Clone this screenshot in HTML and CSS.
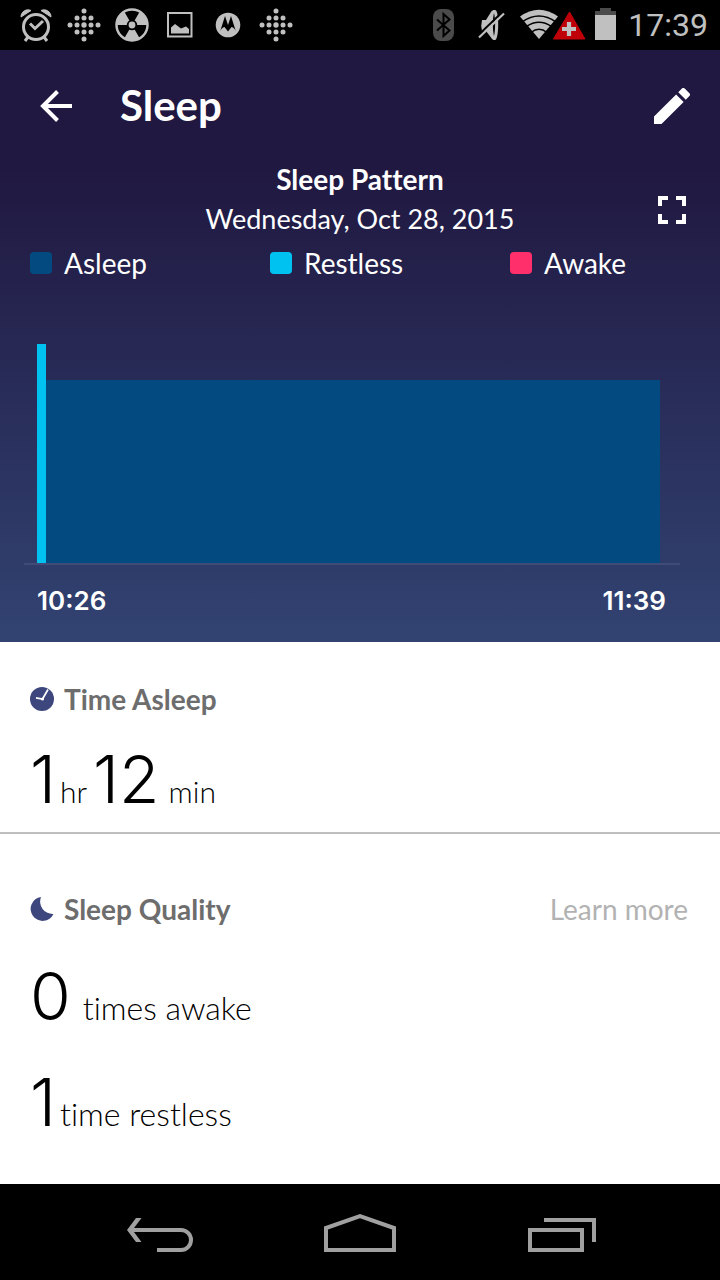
FILE: index.html
```html
<!DOCTYPE html>
<html lang="en">
<head>
<meta charset="utf-8">
<meta name="viewport" content="width=device-width, initial-scale=1">
<title>Sleep</title>
<link rel="stylesheet" href="styles.css">
</head>
<body>
<div class="screen">
  <div class="status">
    <div class="status-left">
      <svg width="32" height="34" viewBox="0 0 32 34" fill="none" stroke="#c0c0c0" stroke-width="3"><circle cx="16" cy="19" r="12.5"/><path d="M10 15.500l5 5 8-7.500M8 29l-3 4M24 29l3 4"/><path d="M1 9a7 7 0 0 1 10-6.500zM31 9a7 7 0 0 0-10-6.500z" fill="#c0c0c0" stroke="#c0c0c0" stroke-width="1"/></svg>
      <svg width="34" height="34" viewBox="0 0 34 34" fill="#c0c0c0"><circle cx="17" cy="3" r="2.500"/><circle cx="10" cy="10" r="2.500"/><circle cx="17" cy="10" r="2.500"/><circle cx="24" cy="10" r="2.500"/><circle cx="3" cy="17" r="2.500"/><circle cx="10" cy="17" r="2.500"/><circle cx="17" cy="17" r="2.700"/><circle cx="24" cy="17" r="2.500"/><circle cx="31" cy="17" r="2.500"/><circle cx="10" cy="24" r="2.500"/><circle cx="17" cy="24" r="2.500"/><circle cx="24" cy="24" r="2.500"/><circle cx="17" cy="31" r="2.500"/></svg>
      <svg width="34" height="34" viewBox="0 0 34 34"><circle cx="17" cy="17" r="15.500" fill="#000" stroke="#c0c0c0" stroke-width="2.500"/><path d="M17 17L1.500 17A15.500 15.500 0 0 1 9.200 3.600zM17 17L24.800 3.600A15.500 15.500 0 0 1 32.500 17zM17 17l7.800 13.400a15.500 15.500 0 0 1-15.600 0z" fill="#c0c0c0"/><circle cx="17" cy="17" r="4.300" fill="#c0c0c0" stroke="#000" stroke-width="1.800"/></svg>
      <svg width="34" height="34" viewBox="0 0 34 34"><path d="M5 5h23.500v23.500H5z" fill="none" stroke="#c0c0c0" stroke-width="2"/><path d="M8 25.500v-6l4-3.500 6 4.500 5-2 3 2.500v4.500z" fill="#c0c0c0"/></svg>
      <svg width="34" height="34" viewBox="0 0 34 34"><circle cx="17" cy="17" r="12.300" fill="#c0c0c0"/><path d="M9 23.700L14 8L17 17L20 8L25 23.700Q23.500 19.500 20.500 19L17 23.500L13.500 19Q10.500 19.500 9 23.700z" fill="#000"/></svg>
      <svg width="34" height="34" viewBox="0 0 34 34" fill="#c0c0c0"><circle cx="17" cy="3" r="2.500"/><circle cx="10" cy="10" r="2.500"/><circle cx="17" cy="10" r="2.500"/><circle cx="24" cy="10" r="2.500"/><circle cx="3" cy="17" r="2.500"/><circle cx="10" cy="17" r="2.500"/><circle cx="17" cy="17" r="2.700"/><circle cx="24" cy="17" r="2.500"/><circle cx="31" cy="17" r="2.500"/><circle cx="10" cy="24" r="2.500"/><circle cx="17" cy="24" r="2.500"/><circle cx="24" cy="24" r="2.500"/><circle cx="17" cy="31" r="2.500"/></svg>
    </div>
    <div class="status-right">
      <svg width="22" height="34" viewBox="0 0 22 34"><rect y="1" width="21" height="32" rx="8" fill="#4b4b4b"/><path d="M4 11.500l12.500 11-6 5.500V6l6 5.500L4 22.500" fill="none" stroke="#000" stroke-width="2"/></svg>
      <svg class="mute" width="28" height="34" viewBox="0 0 28 34"><path d="M4 12h4l5-8c1.500-2 3.500-2.500 5-1.500 3 3 3 25 0 29-2 1.500-4 0-5-2L8 23H4q-1.500-5 0-11z" fill="#c0c0c0"/><path d="M16 5c1.500 5 1.500 18 0 23-1.500-5-1.500-18 0-23z" fill="#000"/><path d="M0 27.500L25 3.500" stroke="#000" stroke-width="2"/><path d="M1 29.500L26 5.500" stroke="#c0c0c0" stroke-width="2.200"/></svg>
      <svg class="wifi" width="66" height="34" viewBox="0 0 66 34"><path d="M0 8.500Q19-5 38 8.500L19 31z" fill="#c0c0c0"/><path d="M2 14Q19 2 36 14M6.500 18.500Q19 10 31.500 18.500M11 24.500Q19 18 27 24.500" fill="none" stroke="#000" stroke-width="1.600"/><path d="M49.500 4L65 31H33.500z" fill="#c00008" stroke="#c00008"/><path d="M49 14v14M42 21h14" stroke="#c0c0c0" stroke-width="4.200"/></svg>
      <svg class="battery" width="21" height="34" viewBox="0 0 21 34"><path d="M0 7V3h5V0h11v3h5v4z" fill="#4b4b4b"/><path d="M0 7h21v25H0z" fill="#c0c0c0"/></svg>
      <span class="clock">17:39</span>
    </div>
  </div>

  <main class="main">
    <section class="hero">
      <header class="bar">
        <button class="icon-button" aria-label="Back"><svg width="32" height="32" viewBox="0 0 32 32" fill="none" stroke="#fff" stroke-width="4"><path d="M17.500 1.500L3 16l14.500 14.500M2 16h30"/></svg></button>
        <h1 class="title">Sleep</h1>
        <button class="icon-button" aria-label="Edit"><svg width="36" height="36" viewBox="3 3 18 18" fill="#fff"><path d="M3 17.250V21h3.750L17.810 9.940l-3.750-3.750L3 17.250zM20.710 7.040c.39-.39.39-1.020 0-1.410l-2.340-2.340a1 1 0 0 0-1.410 0l-1.830 1.830 3.750 3.750 1.830-1.830z"/></svg></button>
      </header>
      <div class="pattern">
        <div class="pattern-text">
          <h2 class="pattern-title">Sleep Pattern</h2>
          <p class="date">Wednesday, Oct 28, 2015</p>
        </div>
        <button class="icon-button expand" aria-label="Full screen"><svg width="28" height="28" viewBox="0 0 28 28" fill="none" stroke="#fff" stroke-width="4"><path d="M2 10V2h8M18 2h8v8M26 18v8h-8M10 26H2v-8"/></svg></button>
      </div>
      <ul class="legend">
        <li><span class="swatch asleep"></span>Asleep</li>
        <li><span class="swatch restless"></span>Restless</li>
        <li><span class="swatch awake"></span>Awake</li>
      </ul>
      <div class="chart">
        <div class="bar-restless"></div>
        <div class="bar-asleep"></div>
      </div>
      <div class="times"><span>10:26</span><span>11:39</span></div>
    </section>

    <section class="card time-asleep">
      <h2 class="card-title"><svg width="24" height="24" viewBox="0 0 24 24"><circle cx="12" cy="12" r="12" fill="#3d477d"/><path d="M6 10.800l6.500 1.200L18 2.500" fill="none" stroke="#fff" stroke-width="1.700"/><circle cx="12.500" cy="12" r="1.500" fill="#fff"/></svg>Time Asleep</h2>
      <p class="stat"><span class="num">1</span><span class="unit">hr</span><span class="num second">12</span><span class="unit wide">min</span></p>
    </section>

    <section class="card quality">
      <div class="card-head">
        <h2 class="card-title"><svg width="24" height="24" viewBox="0 0 24 24"><path d="M11 0A12 12 0 1 0 23.500 17A12.500 12.500 0 0 1 11 0z" fill="#3d477d"/></svg>Sleep Quality</h2>
        <a class="learn" href="#">Learn more</a>
      </div>
      <p class="stat"><span class="num">0</span><span class="unit wide">times awake</span></p>
      <p class="stat"><span class="num">1</span><span class="unit">time restless</span></p>
    </section>
  </main>

  <nav class="nav">
    <button class="nav-button" aria-label="Back"><svg width="68" height="40" viewBox="0 0 68 40" fill="none" stroke="#a0a0a0" stroke-width="4"><path d="M5 18h50a9 9 0 0 1 0 20H31"/><path d="M15.500 6H10L1 18l9 12h5.500L6.500 18z" fill="#a0a0a0" stroke="none"/></svg></button>
    <button class="nav-button" aria-label="Home"><svg width="72" height="40" viewBox="0 0 72 40" fill="none" stroke="#a0a0a0" stroke-width="4"><path d="M2 38V16L36 4l34 12v22z"/></svg></button>
    <button class="nav-button" aria-label="Recent apps"><svg width="72" height="40" viewBox="0 0 72 40" fill="none" stroke="#a0a0a0" stroke-width="4"><path d="M6 18h52v20H6zM20 8h50v22"/></svg></button>
  </nav>
</div>
</body>
</html>
```

FILE: styles.css
```css
* { box-sizing: border-box; }
body { margin: 0; font-family: Lato, "Open Sans", sans-serif; font-variant-ligatures: none; background: #fff; color: #000; }
h1, h2, p, ul { margin: 0; padding: 0; }
svg { display: block; flex: none; }
button { margin: 0; padding: 0; border: 0; background: none; cursor: pointer; }
a { color: inherit; text-decoration: none; }

.screen { min-height: 100vh; display: flex; flex-direction: column; }

.status { height: 50px; padding: 0 12px 0 20px; background: #000; display: flex; align-items: center; justify-content: space-between; }
.status-left { display: flex; align-items: center; gap: 14px; }
.status-left svg:first-child { margin-right: 1px; }
.status-right { display: flex; align-items: center; }
.mute { margin-left: 23px; }
.wifi { margin-left: 14px; }
.battery { margin-left: 9px; }
.clock { margin-left: 12px; font: 32px/40px Roboto, sans-serif; color: #c0c0c0; }

.main { flex: 1; }

.hero { padding: 0 30px 23px; color: #fff; background: linear-gradient(#201841 0, #201841 20%, #324372 100%); }
.bar { height: 111px; display: flex; align-items: center; }
.bar .icon-button:first-child { margin-left: 10px; }
.title { flex: 1; margin-left: 48px; padding-bottom: 2px; font-size: 42px; line-height: 48px; font-weight: 700; }

.pattern { position: relative; display: flex; justify-content: center; text-align: center; }
.pattern-title { font-size: 28px; line-height: 36px; font-weight: 700; }
.date { font-size: 27px; line-height: 44px; }
.expand { position: absolute; right: 4px; bottom: 17px; }

.legend { list-style: none; display: grid; grid-template-columns: 240px 240px 1fr; margin-top: 2px; font-size: 28px; line-height: 40px; }
.legend li { display: flex; align-items: center; gap: 12px; }
.swatch { width: 22px; height: 22px; border-radius: 4px; }
.asleep { background: #024a80; }
.restless { background: #00c2f0; }
.awake { background: #ff2f6c; }

.chart { margin: 61px 10px 0 -6px; padding: 0 20px 0 13px; height: 221px; border-bottom: 2px solid #414b77; display: flex; align-items: flex-end; }
.bar-restless { width: 9px; height: 100%; background: #00c2f0; }
.bar-asleep { flex: 1; height: 183px; background: #024a80; }
.times { display: flex; justify-content: space-between; margin: 18px 24px 0 7px; font: 600 26px/36px Inter, sans-serif; }

.card { padding-left: 30px; padding-right: 32px; }
.time-asleep { padding-top: 36px; padding-bottom: 4px; border-bottom: 2px solid #bfbfbf; }
.quality { padding-top: 54px; }
.card-head { display: flex; justify-content: space-between; align-items: center; }
.card-title { display: flex; align-items: center; gap: 10px; font-size: 28px; line-height: 42px; font-weight: 700; color: #6d6d6d; }
.learn { font-size: 28px; line-height: 42px; color: #b2b2b2; }

.stat { display: flex; align-items: baseline; }
.num { font: 300 66px/98px Inter, sans-serif; }
.unit { margin-left: 4px; font-size: 30px; line-height: 36px; font-weight: 300; }
.second { margin-left: 6px; }
.wide { margin-left: 9px; }
.time-asleep .stat { margin-top: 10px; }
.quality .num { line-height: 106px; }
.quality .unit { font-size: 32px; }
.quality .wide { margin-left: 12px; }
.quality .card-head + .stat { margin-top: 13px; }

.nav { height: 96px; padding: 0 60px; background: #000; display: grid; grid-template-columns: repeat(3, 1fr); align-items: center; }
.nav-button { display: flex; justify-content: center; }
```
